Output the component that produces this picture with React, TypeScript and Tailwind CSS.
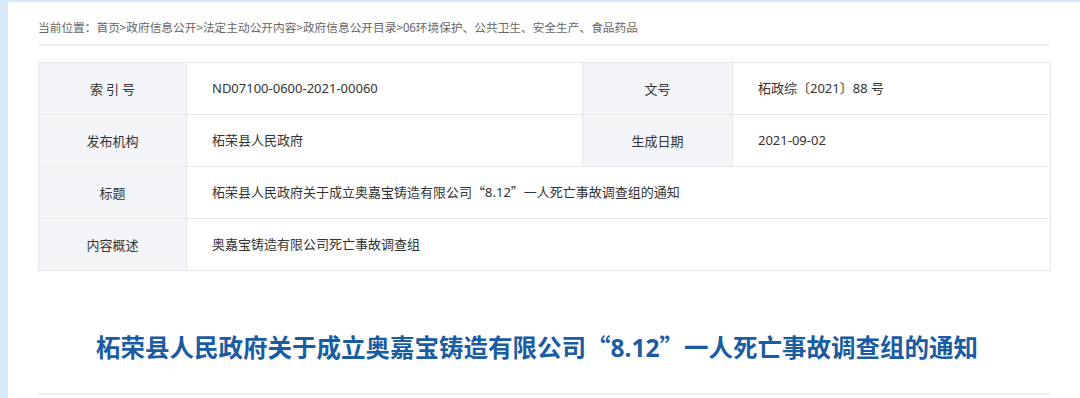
import React from "react";

const font = { fontFamily: '"Noto Sans CJK SC", "Noto Sans", sans-serif' };
const latinFirst = { fontFamily: '"Noto Sans", "Noto Sans CJK SC", sans-serif' };

function Label({ children }: { children: React.ReactNode }) {
  return (
    <td className="w-[148px] h-[52px] border border-[#e8e8e8] bg-[#f4f5f9] text-center text-[13px] text-[#333]">
      {children}
    </td>
  );
}

function Value({
  children,
  colSpan,
}: {
  children: React.ReactNode;
  colSpan?: number;
}) {
  return (
    <td
      colSpan={colSpan}
      className="h-[52px] border border-[#e8e8e8] bg-white pl-[25px] text-[13px] text-[#333]"
      style={latinFirst}
    >
      {children}
    </td>
  );
}

export default function App() {
  return (
    <div className="h-[398px] overflow-hidden bg-[#d6e9fb] pl-2 pt-[2px]" style={font}>
      <div className="h-full bg-white px-[30px]">
        <div className="pt-[15px] text-[11.7px] leading-5 text-[#666]">
          当前位置：首页&gt;政府信息公开&gt;法定主动公开内容&gt;政府信息公开目录&gt;06环境保护、公共卫生、安全生产、食品药品
        </div>
        <div className="mt-[7px] h-[2px] bg-[#eeeeee]" />

        <table className="mt-4 w-[1012px] table-fixed border-collapse">
          <colgroup>
            <col className="w-[148px]" />
            <col className="w-[396px]" />
            <col className="w-[150px]" />
            <col className="w-[318px]" />
          </colgroup>
          <tbody>
            <tr>
              <Label>索 引 号</Label>
              <Value>ND07100-0600-2021-00060</Value>
              <Label>文号</Label>
              <Value>柘政综〔2021〕88 号</Value>
            </tr>
            <tr>
              <Label>发布机构</Label>
              <Value>柘荣县人民政府</Value>
              <Label>生成日期</Label>
              <Value>2021-09-02</Value>
            </tr>
            <tr>
              <Label>标题</Label>
              <Value colSpan={3}>
                柘荣县人民政府关于成立奥嘉宝铸造有限公司
                <span style={font}>“</span>8.12<span style={font}>”</span>
                一人死亡事故调查组的通知
              </Value>
            </tr>
            <tr>
              <Label>内容概述</Label>
              <Value colSpan={3}>奥嘉宝铸造有限公司死亡事故调查组</Value>
            </tr>
          </tbody>
        </table>

        <h1 className="mt-[60px] pr-[14px] text-center text-[24.5px] font-bold leading-8 text-[#1a5ca3]">
          柘荣县人民政府关于成立奥嘉宝铸造有限公司“<span style={latinFirst}>8.12</span>”一人死亡事故调查组的通知
        </h1>
        <div className="mt-[29px] h-[2px] bg-[#eeeeee]" />
      </div>
    </div>
  );
}
